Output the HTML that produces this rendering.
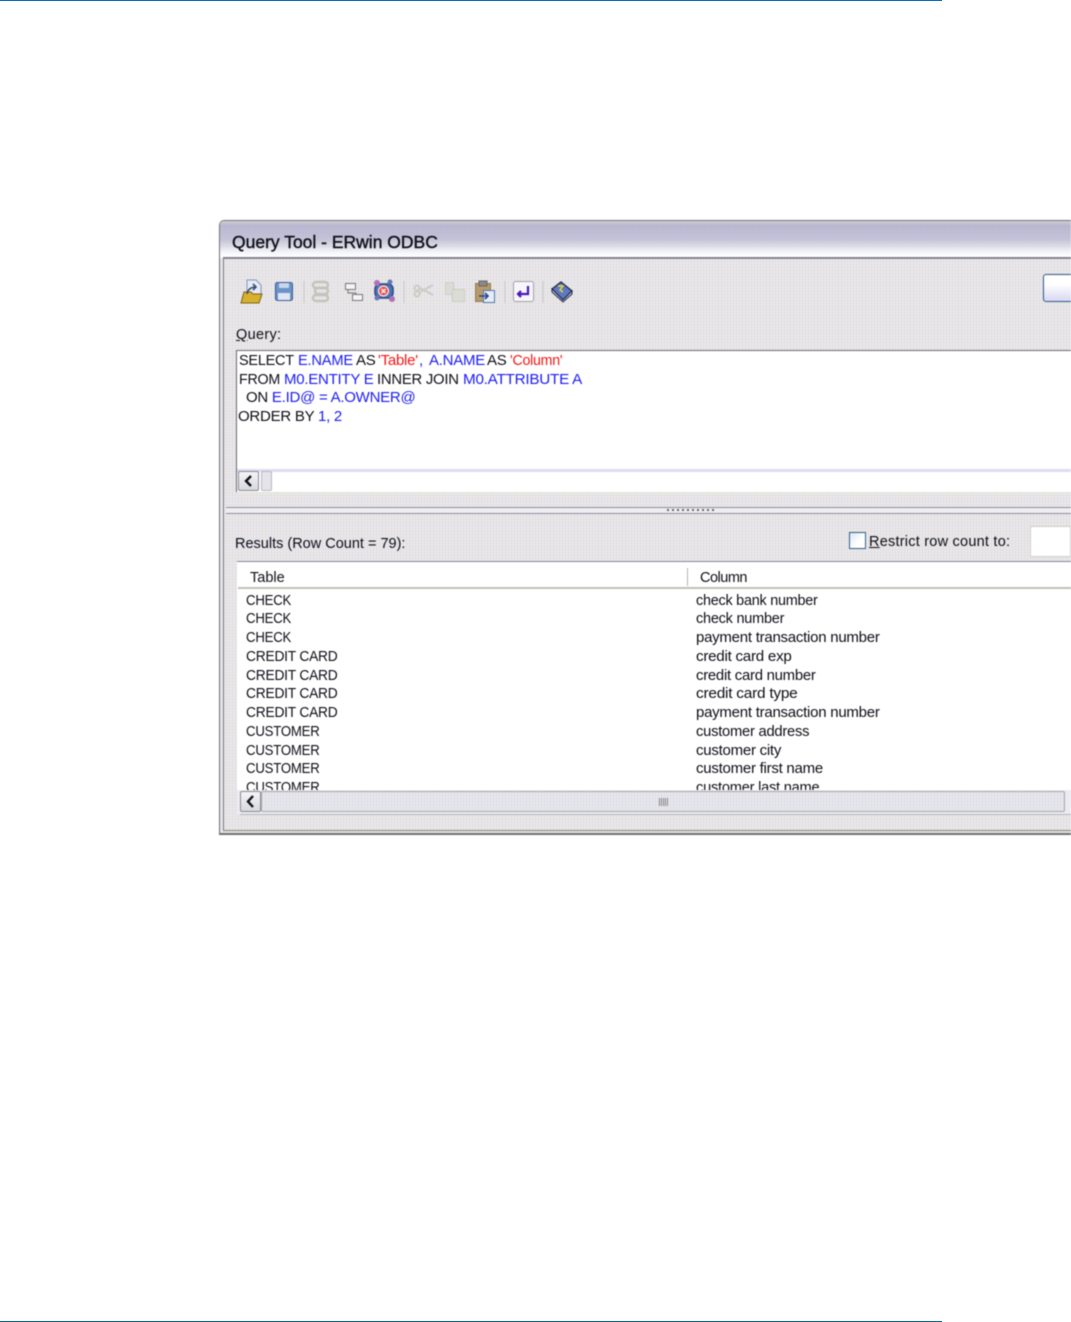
<!DOCTYPE html>
<html><head><meta charset="utf-8"><style>
html,body{margin:0;padding:0;background:#fff;width:1071px;height:1322px;overflow:hidden}
body{position:relative;font-family:"Liberation Sans",sans-serif}
div{position:absolute}
#win{left:0;top:0;width:1071px;height:1322px;overflow:hidden;filter:blur(.45px)}
.t{position:absolute;white-space:pre;font-size:15px;line-height:18px;color:#0e0e16;letter-spacing:-.25px;transform-origin:0 0}
.l{font-size:14.500px;letter-spacing:0}
.b{color:#1c1cf4}.r{color:#f41414}
.dither{background-color:#ebe9f0;background-image:repeating-linear-gradient(0deg,rgba(226,226,170,.5) 0 1px,transparent 1px 3px),repeating-linear-gradient(90deg,rgba(205,205,255,.5) 0 1px,transparent 1px 3px)}
</style></head><body>
<div style="left:0;top:0;width:942px;height:1px;background:#0b6cb8"></div>
<div style="left:0;top:1321px;width:942px;height:1px;background:#0e6a8a"></div>
<div id="win">
<div class="dither" style="left:219px;top:220px;width:852px;height:615px;border:solid #70707a;border-width:1px 0 0 1px;border-top-left-radius:5px;box-sizing:border-box"></div>
<div style="left:220px;top:221px;width:851px;height:37px;border-top-left-radius:4px;background:linear-gradient(#cfcfd8 0,#b4b3d8 12%,#c2c1e2 50%,#e4e3f0 72%,#fbfbfe 90%,#fff 100%)"></div>
<div style="left:220px;top:221px;width:851px;height:26px;background:repeating-linear-gradient(90deg,rgba(210,210,160,.22) 0 1px,transparent 1px 3px),repeating-linear-gradient(0deg,rgba(210,210,160,.18) 0 1px,transparent 1px 3px)"></div>
<div style="left:223px;top:257px;width:848px;height:2px;background:#85858a"></div>
<div style="left:223px;top:257px;width:1px;height:574px;background:#77777f"></div>
<div style="left:223px;top:830px;width:848px;height:1px;background:#85857f"></div>
<div style="left:219px;top:833px;width:852px;height:2px;background:#70706a"></div>
<div class="t" style="left:232px;top:230.500px;font-size:17.500px;line-height:22px;letter-spacing:0;color:#101018;-webkit-text-stroke:.4px #101018">Query Tool - ERwin ODBC</div>

<svg style="position:absolute;left:236px;top:276px" width="340" height="32" viewBox="0 0 340 32">
<path d="M11 4h9l5 5v12H11z" fill="#e4eaf8" stroke="#7f95c0"/>
<path d="M5 27l3-11h7l2 2h9l-3 9z" fill="#d8b02e" stroke="#7d6412"/>
<path d="M11 18c1-5 4-7 9-7m-3-3l3 3-3 3" fill="none" stroke="#3a4a6a" stroke-width="1.600"/>
<rect x="39.500" y="6.500" width="17" height="18" rx="2" fill="#6b93c8" stroke="#3a5a90"/>
<rect x="43" y="7" width="10" height="5" fill="#c8d6ea"/><rect x="42" y="17" width="12" height="7" fill="#e0e7f2"/>
<path d="M68 5v22" stroke="#c6c6ca"/>
<g fill="none" stroke="#c2c4ba" stroke-width="2.400"><rect x="77" y="6" width="15" height="6" rx="3"/><rect x="79" y="12" width="13" height="6" rx="3"/><rect x="77" y="19" width="15" height="6" rx="3"/></g>
<rect x="109.500" y="7.500" width="10" height="6" fill="#f4f4f4" stroke="#777"/><rect x="116.500" y="18.500" width="10" height="6" fill="#f4f4f4" stroke="#777"/><path d="M112 14v3h8v2" fill="none" stroke="#777"/>
<rect x="139" y="8" width="18" height="14" rx="5" fill="#4d74b4" stroke="#2d4a80" stroke-width="1.500"/>
<circle cx="141" cy="7" r="3" fill="#b070b8"/><circle cx="156" cy="23" r="3" fill="#b070b8"/><circle cx="141" cy="22" r="2.500" fill="#6a78b8"/><circle cx="154" cy="6" r="2.500" fill="#6a78b8"/>
<circle cx="147.500" cy="15" r="5" fill="#f05050" stroke="#fff"/><path d="M145.500 13l4 4m0-4l-4 4" stroke="#fff" stroke-width="1.300"/>
<path d="M168 5v22" stroke="#c6c6ca"/>
<g fill="none" stroke="#cbccc4" stroke-width="2"><circle cx="181" cy="18" r="2.500"/><circle cx="181" cy="12" r="2.500"/><path d="M184 16l13-7m-13 3l13 7"/></g>
<g fill="#dcdcd6" stroke="#cdcdc6"><rect x="209.500" y="6.500" width="8" height="12"/><rect x="216.500" y="13.500" width="12" height="12"/></g>
<rect x="239.500" y="7.500" width="15" height="18" fill="#b89a6a" stroke="#8c7a58"/><rect x="243" y="5" width="8" height="5" fill="#8a8a8a" stroke="#666"/>
<rect x="247.500" y="14.500" width="11" height="12" fill="#e6ecf8" stroke="#5078b0"/><path d="M243 20h9m-3-3l3 3-3 3" fill="none" stroke="#23468c" stroke-width="1.600"/>
<path d="M269 5v22" stroke="#c6c6ca"/>
<rect x="277.500" y="5.500" width="20" height="20" rx="2" fill="#f6f6fc" stroke="#a0a0a8"/>
<path d="M292 10v8h-10m3-3l-3 3 3 3" fill="none" stroke="#4a18b8" stroke-width="2.200"/>
<path d="M307 5v22" stroke="#c6c6ca"/>
<path d="M316 13l9-7 11 9-9 9z" fill="#6078c4" stroke="#1e2a4a" stroke-width="1.300"/>
<path d="M327 24l9-9v3l-9 8-11-10v-3z" fill="#d8d8e0" stroke="#1e2a4a"/>
<path d="M322 10h5l-3 4 3 2" fill="none" stroke="#e8e030" stroke-width="1.400"/>
</svg>
<div style="left:1043px;top:274px;width:40px;height:28px;box-sizing:border-box;border:1.500px solid #2a5a8e;border-radius:3px;background:linear-gradient(#fff 35%,#d8d8f2)"></div>

<div class="t l" style="left:236px;top:326px;letter-spacing:.3px"><u>Q</u>uery:</div>

<div style="left:236px;top:350px;width:835px;height:142px;background:#fff;border:solid #6c6c70;border-width:1px 0 0 1px;box-sizing:border-box"></div>
<div class="t" style="left:239px;top:352px;transform:scaleX(.965)">SELECT</div>
<div class="t b" style="left:297.500px;top:352px;transform:scaleX(.98)">E.NAME</div>
<div class="t" style="left:356px;top:352px">AS</div>
<div class="t r" style="left:378px;top:352px">'Table'</div>
<div class="t b" style="left:419px;top:352px">,</div>
<div class="t b" style="left:429px;top:352px">A.NAME</div>
<div class="t" style="left:487px;top:352px">AS</div>
<div class="t r" style="left:510px;top:352px;transform:scaleX(.945)">'Column'</div>
<div class="t" style="left:239px;top:371px;transform:scaleX(.95)">FROM</div>
<div class="t b" style="left:284px;top:371px">M0.ENTITY E</div>
<div class="t" style="left:377px;top:371px;transform:scaleX(.99)">INNER JOIN</div>
<div class="t b" style="left:463px;top:371px;transform:scaleX(1.017)">M0.ATTRIBUTE A</div>
<div class="t" style="left:246px;top:389px">ON <span class="b">E.ID@ = A.OWNER@</span></div>
<div class="t" style="left:238px;top:408px">ORDER BY <span class="b">1, 2</span></div>
<div style="left:237px;top:469px;width:834px;height:3px;background:#dcdcf4"></div>
<div style="left:238px;top:471px;width:21px;height:20px;box-sizing:border-box;border:1px solid #8a8a90;border-radius:2px;background:linear-gradient(#f4f4f8,#d8d8e0)"></div>
<svg style="position:absolute;left:238px;top:471px" width="21" height="20"><path d="M13 5l-5 5 5 5" fill="none" stroke="#111" stroke-width="2.400"/></svg>
<div style="left:261px;top:471px;width:11px;height:20px;box-sizing:border-box;border:1px solid #b8b8c0;border-radius:2px;background:#e4e4ea"></div>

<div style="left:226px;top:507px;width:845px;height:1px;background:#8f8f8f"></div>
<div style="left:226px;top:513px;width:845px;height:1px;background:#8f8f8f"></div>
<div style="left:226px;top:508px;width:845px;height:5px;background:#eeeef2"></div>
<div style="left:667px;top:509px;width:47px;height:2px;background:repeating-linear-gradient(90deg,#666 0 2px,transparent 2px 5px)"></div>

<div class="t l" style="left:235px;top:535px;letter-spacing:0">Results (Row Count = 79):</div>
<div style="left:849px;top:532px;width:17px;height:17px;box-sizing:border-box;border:1.500px solid #2f5f8f;background:linear-gradient(135deg,#dde4f4,#fff 60%)"></div>
<div class="t l" style="left:869px;top:533px;letter-spacing:.23px"><u>R</u>estrict row count to:</div>
<div style="left:1030px;top:526px;width:41px;height:31px;box-sizing:border-box;border:1px solid #cfcfcf;background:#fff"></div>

<div style="left:237px;top:561px;width:834px;height:231px;background:#fff;overflow:hidden;border-top:1px solid #87878c;box-sizing:border-box">
<div style="left:1px;top:25px;width:833px;height:2px;background:#c0c0b4"></div>
<div style="left:450px;top:6px;width:1px;height:18px;background:#b4b4b4"></div>
<div class="t l" style="left:13px;top:7px">Table</div>
<div class="t l" style="left:463px;top:7px;letter-spacing:-.5px">Column</div>
<div class="t" style="left:9px;top:30px;transform:scaleX(.88)">CHECK</div><div class="t" style="left:459px;top:30px;transform:scaleX(.96)">check bank number</div>
<div class="t" style="left:9px;top:48px;transform:scaleX(.88)">CHECK</div><div class="t" style="left:459px;top:48px;transform:scaleX(.967)">check number</div>
<div class="t" style="left:9px;top:67px;transform:scaleX(.88)">CHECK</div><div class="t" style="left:459px;top:67px">payment transaction number</div>
<div class="t" style="left:9px;top:86px;transform:scaleX(.92)">CREDIT CARD</div><div class="t" style="left:459px;top:86px;transform:scaleX(1.01)">credit card exp</div>
<div class="t" style="left:9px;top:104.500px;transform:scaleX(.92)">CREDIT CARD</div><div class="t" style="left:459px;top:104.500px;transform:scaleX(.992)">credit card number</div>
<div class="t" style="left:9px;top:123px;transform:scaleX(.92)">CREDIT CARD</div><div class="t" style="left:459px;top:123px;transform:scaleX(1.03)">credit card type</div>
<div class="t" style="left:9px;top:142px;transform:scaleX(.92)">CREDIT CARD</div><div class="t" style="left:459px;top:142px">payment transaction number</div>
<div class="t" style="left:9px;top:161px;transform:scaleX(.88)">CUSTOMER</div><div class="t" style="left:459px;top:161px;transform:scaleX(.983)">customer address</div>
<div class="t" style="left:9px;top:179.500px;transform:scaleX(.88)">CUSTOMER</div><div class="t" style="left:459px;top:179.500px">customer city</div>
<div class="t" style="left:9px;top:198px;transform:scaleX(.88)">CUSTOMER</div><div class="t" style="left:459px;top:198px">customer first name</div>
<div class="t" style="left:9px;top:216.500px;transform:scaleX(.88)">CUSTOMER</div><div class="t" style="left:459px;top:216.500px;transform:scaleX(.976)">customer last name</div>
</div>
<div style="left:237px;top:790px;width:834px;height:24px;background:#ecebf3"></div>
<div style="left:240px;top:814px;width:831px;height:1px;background:#b4b4b8"></div>
<div class="dither" style="left:261px;top:791px;width:804px;height:21px;box-sizing:border-box;border:1px solid #a8a8b0;border-radius:2px;background-color:#e8e8f6"></div>
<div style="left:240px;top:791px;width:21px;height:21px;box-sizing:border-box;border:1px solid #8a8a90;border-radius:2px;background:linear-gradient(#f4f4f8,#d8d8e0)"></div>
<svg style="position:absolute;left:240px;top:791px" width="21" height="21"><path d="M13 5l-5 5.500 5 5.500" fill="none" stroke="#111" stroke-width="2.400"/></svg>
<div style="left:659px;top:798px;width:9px;height:8px;background:repeating-linear-gradient(90deg,#888 0 1px,transparent 1px 2px)"></div>
</div>
</body></html>
